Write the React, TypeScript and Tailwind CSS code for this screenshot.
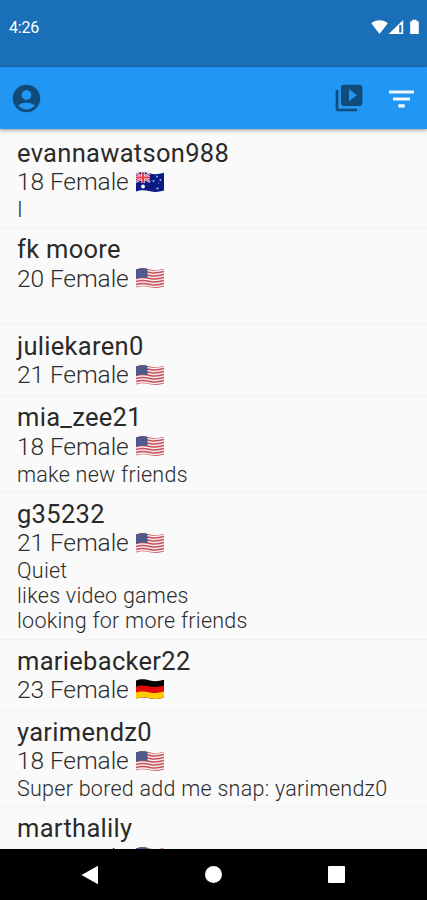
import { MdAccountCircle, MdVideoLibrary } from 'react-icons/md'

type Country = 'au' | 'us' | 'de'

interface Person {
  name: string
  age: number
  gender: string
  country: Country
  bio?: string[]
}

const PEOPLE: Person[] = [
  { name: 'evannawatson988', age: 18, gender: 'Female', country: 'au', bio: ['I'] },
  { name: 'fk moore',        age: 20, gender: 'Female', country: 'us', bio: [''] },
  { name: 'juliekaren0',     age: 21, gender: 'Female', country: 'us' },
  { name: 'mia_zee21',       age: 18, gender: 'Female', country: 'us', bio: ['make new friends'] },
  { name: 'g35232',          age: 21, gender: 'Female', country: 'us', bio: ['Quiet', 'likes video games', 'looking for more friends'] },
  { name: 'mariebacker22',   age: 23, gender: 'Female', country: 'de' },
  { name: 'yarimendz0',      age: 18, gender: 'Female', country: 'us', bio: ['Super bored add me snap: yarimendz0'] },
  { name: 'marthalily',      age: 20, gender: 'Female', country: 'us' },
]

/* ── Waving flags ── */
const WAVE = 'M0 1.5C5 -.5 9 .2 14 1.5S23 2.2 28 .8V18.5C23 20 19 20.4 14 19.2S5 17.6 0 19.4Z'

function Flag({ country }: { country: Country }) {
  const clip = `wave-${country}`
  return (
    <svg viewBox="0 0 28 21" className="mb-px h-[21px] w-7 shrink-0">
      <defs>
        <clipPath id={clip}><path d={WAVE} /></clipPath>
      </defs>
      <g clipPath={`url(#${clip})`}>
        {country === 'us' && (
          <>
            <rect width="28" height="21" fill="#f6e9e9" />
            {[1, 4, 7, 10, 13, 16, 19].map((y) => (
              <path key={y} d={`M0 ${y + 0.6}C5 ${y - 1.2} 9 ${y - 0.7} 14 ${y + 0.5}S23 ${y + 1} 28 ${y - 0.5}`} fill="none" stroke="#c6505d" strokeWidth="1.4" />
            ))}
            <path d="M0 0H11.5V10.2C8 9.3 4 9.3 0 10.8Z" fill="#4d5688" />
            <path d="M1.5 3H10M1.5 5.5H10M1.5 8H10" stroke="#6c74a0" strokeWidth=".7" strokeDasharray="1 1" />
          </>
        )}
        {country === 'de' && (
          <>
            <rect width="28" height="21" fill="#000" />
            <path d="M0 7.6C5 5.8 9 6.4 14 7.5S23 8 28 6.6V21H0Z" fill="#e00b0b" />
            <path d="M0 13.6C5 11.8 9 12.4 14 13.5S23 14 28 12.6V21H0Z" fill="#fc0" />
          </>
        )}
        {country === 'au' && (
          <>
            <rect width="28" height="21" fill="#0b1a83" />
            <path d="M0 1L14 10M14 1L0 10" stroke="#f3dce4" strokeWidth="2.4" />
            <path d="M0 1L14 10M14 1L0 10" stroke="#e0384f" strokeWidth="1" />
            <path d="M7 0V11M0 5.5H14" stroke="#f3dce4" strokeWidth="3.6" />
            <path d="M7 0V11M0 5.5H14" stroke="#ef3b50" strokeWidth="2" />
            <circle cx="7" cy="14.5" r="1.9" fill="#fff" />
            <g fill="#aab4e2">
              <circle cx="21" cy="4.5" r="1" />
              <circle cx="17.5" cy="9" r="1" />
              <circle cx="24.5" cy="8" r="1" />
              <circle cx="21.5" cy="16.5" r="1.1" />
              <circle cx="22.7" cy="11" r=".6" />
            </g>
          </>
        )}
      </g>
    </svg>
  )
}

function StatusBar() {
  return (
    <div className="flex h-[67px] shrink-0 items-start justify-between bg-[#1a70b8] pl-[9px] pr-[7px] pt-[18px] text-white">
      <span className="text-[16px] leading-5 tracking-[-0.2px]">4:26</span>
      <svg viewBox="0 0 49 16" className="mt-[1px] h-4 w-[49px]" fill="#fff">
        <path d="M.3 4.2C4.5 .2 12.5 .2 16.8 4.2L8.5 15Z" />
        <path d="M17.6 15L32.2 1V15Z" />
        <path d="M28.2 6V13.6H30.5V6Z" fill="#1a70b8" />
        <path d="M39.2 2.2H41.2V.8H45.6V2.2H47.8V15H39.2Z" />
      </svg>
    </div>
  )
}

function AppBar() {
  return (
    <header className="z-10 flex h-[62px] shrink-0 items-center bg-[#2196f3] pl-[10px] pr-[13px] shadow-[0_1px_4px_rgba(0,0,0,0.45)]">
      <MdAccountCircle className="size-[33px] text-[#114b7a]" />
      <MdVideoLibrary className="ml-auto size-8 text-[#114b7a]" />
      <svg viewBox="0 0 25 18" className="ml-6 mt-px h-[18px] w-[25px]" fill="#f2f8ff">
        <path d="M0 .4H25V3.6H0ZM4 7.4H21V10.6H4ZM9.3 14.2H15.7V17.4H9.3Z" />
      </svg>
    </header>
  )
}

function PersonRow({ person }: { person: Person }) {
  return (
    <li className="border-b border-[#f1f1f1] pb-[5.2px] pt-[7px] pl-[17px]">
      <div className="text-[25.5px] leading-[29.4px] tracking-[0.3px] text-[#2a2a2a]">{person.name}</div>
      <div className="flex h-[28.8px] items-center gap-[7px] text-[24.5px] font-light leading-[28.8px] tracking-[-0.08px] text-[#2c2c2c]">
        <span className="w-[112px] whitespace-nowrap">{person.age} {person.gender}</span>
        <Flag country={person.country} />
      </div>
      {person.bio?.map((line, i) => (
        <div key={i} className="h-[25.1px] text-[21.5px] font-light leading-[25.1px] tracking-[0.26px] text-[#2c2c2c]">{line}</div>
      ))}
    </li>
  )
}

function NavBar() {
  return (
    <nav className="z-10 flex h-[51px] shrink-0 items-center bg-black pl-[81px] text-white">
      <svg viewBox="0 0 18 20" className="h-5 w-[18px]" fill="currentColor"><path d="M.5 10L17 .8V19.2Z" /></svg>
      <div className="ml-[106px] size-[17px] rounded-full bg-white" />
      <div className="ml-[106px] size-[17px] rounded-[1px] bg-white" />
    </nav>
  )
}

export default function App() {
  return (
    <div className="flex h-[900px] w-[427px] flex-col overflow-hidden bg-[#fafafa] font-[Roboto,sans-serif]">
      <StatusBar />
      <AppBar />
      <ul className="min-h-0 flex-1 overflow-hidden pt-[3px]">
        {PEOPLE.map((p) => <PersonRow key={p.name} person={p} />)}
      </ul>
      <NavBar />
    </div>
  )
}
